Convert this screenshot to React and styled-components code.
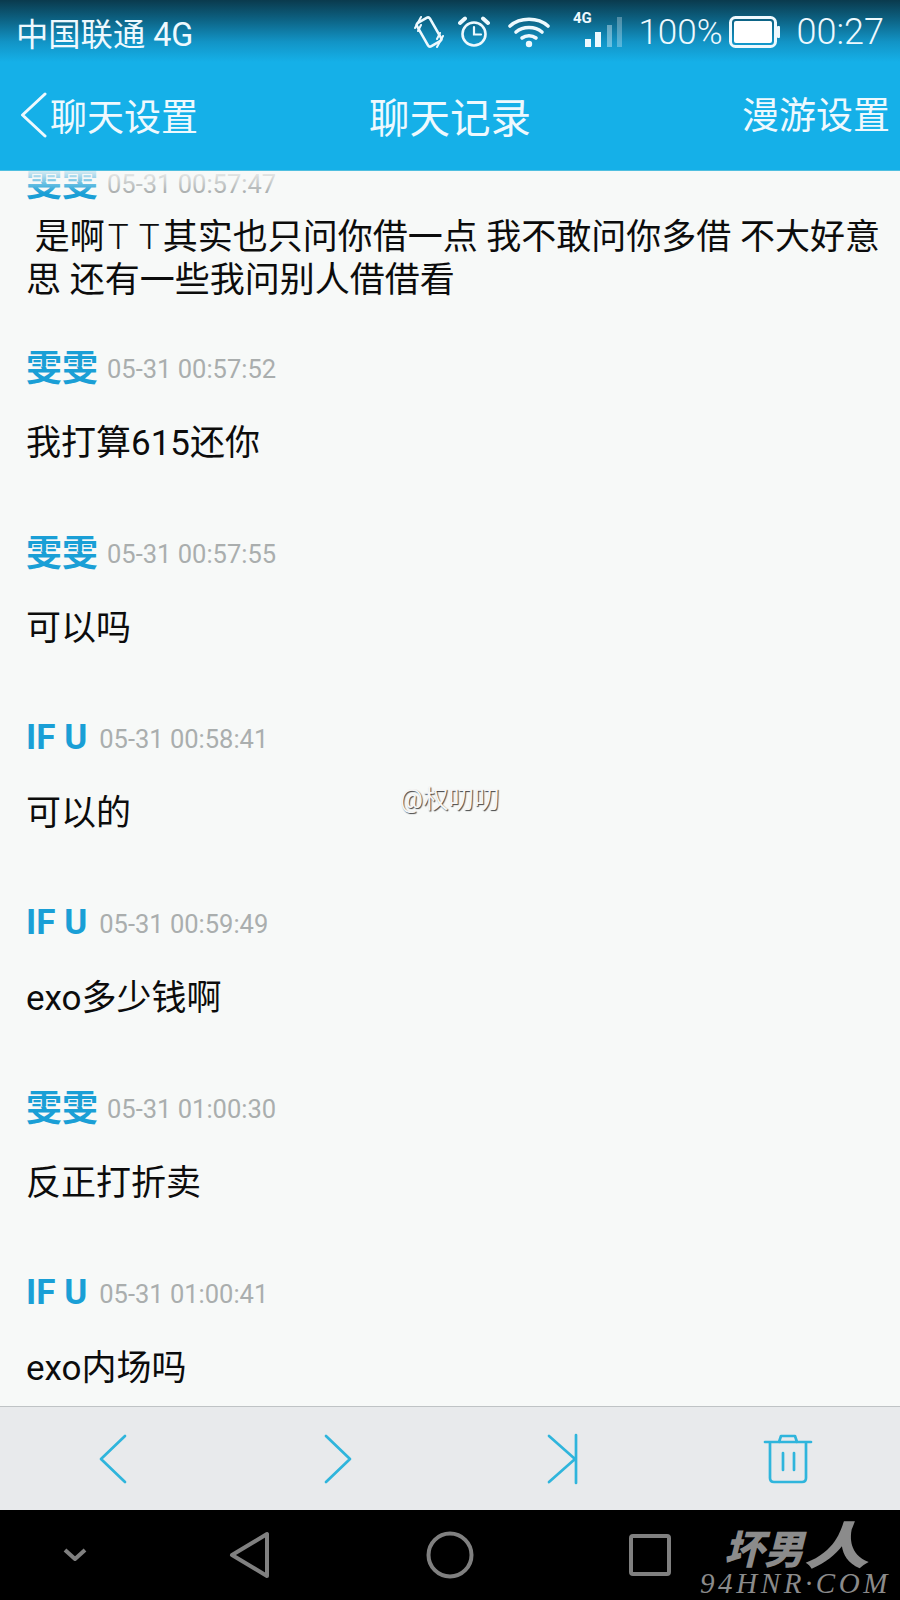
import React from 'react';
import styled, { createGlobalStyle } from 'styled-components';

const GlobalStyle = createGlobalStyle`
  html, body {
    margin: 0;
    padding: 0;
    background: #000;
  }
`;

const FONT = `Roboto, "Noto Sans CJK SC", sans-serif`;

const Emote = styled.span`
  margin: 0 3px;
  word-spacing: 3px;
  font-weight: 300;
`;

const messages = [
  {
    id: 1,
    name: '雯雯',
    time: '05-31 00:57:47',
    text: <> 是啊<Emote>T T</Emote>其实也只问你借一点 我不敢问你多借 不大好意思 还有一些我问别人借借看</>,
  },
  { id: 2, name: '雯雯', time: '05-31 00:57:52', text: '我打算615还你' },
  { id: 3, name: '雯雯', time: '05-31 00:57:55', text: '可以吗' },
  { id: 4, name: 'IF U', time: '05-31 00:58:41', text: '可以的' },
  { id: 5, name: 'IF U', time: '05-31 00:59:49', text: 'exo多少钱啊' },
  { id: 6, name: '雯雯', time: '05-31 01:00:30', text: '反正打折卖' },
  { id: 7, name: 'IF U', time: '05-31 01:00:41', text: 'exo内场吗' },
];

const Page = styled.div`
  position: relative;
  width: 900px;
  height: 1600px;
  display: flex;
  flex-direction: column;
  overflow: hidden;
  font-family: ${FONT};
`;

const Top = styled.header`
  flex: none;
  height: 171px;
  display: flex;
  flex-direction: column;
  color: #eef9fe;
  background: linear-gradient(#0a3a4d 0, #0c5f7f 18px, #1294c6 42px, #15b0e8 62px, #15b0e8 100%);
  border-bottom: 1px solid #4fbfe0;
  box-sizing: border-box;
`;

const StatusBar = styled.div`
  height: 64px;
  display: flex;
  align-items: center;
  padding: 0 16px;
  font-size: 35px;
  font-weight: 300;
`;

const Carrier = styled.span`
  font-size: 32.3px;
  font-weight: 400;
  white-space: pre;
  margin-right: auto;
`;

const StatusIcon = styled.svg`
  flex: none;
  margin-left: ${(p) => p.$gap || 0}px;
`;

const SignalIcon = styled(StatusIcon)`
  margin-top: -6px;
  overflow: visible;
`;

const StatusText = styled.span`
  margin-left: ${(p) => p.$gap || 0}px;
  line-height: 1;
`;

const Clock = styled(StatusText)`
  font-size: 36px;
`;

const TitleBar = styled.div`
  flex: 1;
  display: grid;
  grid-template-columns: 1fr auto 1fr;
  align-items: center;
  padding: 0 10px 4px;
`;

const BackLink = styled.a`
  display: flex;
  align-items: center;
  gap: 3px;
  padding-left: 10px;
  font-size: 37px;
`;

const Title = styled.h1`
  margin: 0;
  font-size: 40.5px;
  font-weight: 400;
`;

const RightLink = styled.a`
  justify-self: end;
  font-size: 37px;
  margin-bottom: 4px;
`;

const ListWrap = styled.main`
  position: relative;
  flex: 1;
  min-height: 0;
  overflow: hidden;
  background: #f7f9f8;
`;

const Fade = styled.div`
  position: absolute;
  left: 0;
  right: 0;
  top: 0;
  height: 22px;
  background: linear-gradient(rgba(247, 249, 248, 0.85), rgba(247, 249, 248, 0));
`;

const List = styled.div`
  display: flex;
  flex-direction: column;
  gap: 68px;
  padding: 0 10px 0 26px;
  margin-top: -8px;
`;

const Message = styled.article`
  margin-bottom: ${(p) => (p.$tight ? -22 : 0)}px;
`;

const Meta = styled.div`
  display: flex;
  align-items: center;
  height: 40px;
  margin-bottom: ${(p) => (p.$tight ? 13 : 34)}px;
`;

const Name = styled.span`
  font-size: ${(p) => (p.$latin ? 35 : 36)}px;
  font-weight: 700;
  color: #1a9fd6;
  margin: 0 ${(p) => (p.$latin ? 12 : 9)}px ${(p) => (p.$latin ? 2 : 6)}px 0;
`;

const Time = styled.span`
  font-size: 25.5px;
  color: #aaaeae;
  position: relative;
  top: 1px;
`;

const Body = styled.p`
  margin: 0;
  font-size: 35px;
  line-height: 43px;
  color: #0c0c0c;
  white-space: pre-wrap;
`;

const Toolbar = styled.nav`
  flex: none;
  height: 104px;
  box-sizing: border-box;
  display: grid;
  grid-template-columns: repeat(4, 1fr);
  align-items: center;
  justify-items: center;
  background: #e8eaec;
  border-top: 1px solid #bfc3c5;
`;

const ToolIcon = styled.svg`
  fill: none;
  stroke: #2fb5dc;
  stroke-width: 2.7;
  stroke-linecap: round;
  stroke-linejoin: round;
`;

const NavBar = styled.nav`
  position: relative;
  flex: none;
  height: 90px;
  display: grid;
  grid-template-columns: 150px 200px 200px 200px 150px;
  align-items: center;
  justify-items: center;
  background: #000;
`;

const NavIcon = styled.svg`
  fill: none;
  stroke: #808080;
  stroke-width: 4;
  stroke-linejoin: round;
`;

const Logo = styled.div`
  position: absolute;
  left: 700px;
  top: 6px;
  width: 195px;
  color: #8b8b8b;
`;

const LogoName = styled.div`
  height: 52px;
  line-height: 52px;
  font-family: "Noto Sans CJK SC", sans-serif;
  font-weight: 900;
  font-style: italic;
  white-space: nowrap;
  padding-left: 24px;
`;

const LogoChar = styled.span`
  display: inline-block;
  font-size: ${(p) => p.$size}px;
  transform: scaleX(${(p) => p.$stretch || 1});
  transform-origin: left center;
`;

const LogoUrl = styled.div`
  font-family: "Liberation Serif", serif;
  font-style: italic;
  font-size: 29px;
  line-height: 30px;
  letter-spacing: 3.6px;
  white-space: nowrap;
`;

const Stamp = styled.div`
  position: absolute;
  left: 400px;
  top: 784px;
  font-size: 25.5px;
  line-height: 30px;
  color: #f6f6f6;
  text-shadow: 1px 1px 1px #444;
`;

const App = () => (
  <Page>
    <GlobalStyle />
    <Top>
      <StatusBar>
        <Carrier>中国联通 4G</Carrier>
        {/* vibrate */}
        <StatusIcon width="30" height="34" viewBox="0 0 30 34" fill="none" stroke="#eef9fe" strokeLinecap="round" strokeLinejoin="round">
          <rect x="7.5" y="3.5" width="15" height="27" rx="2.5" strokeWidth="2.6" transform="rotate(-30 15 17)" />
          <path d="M1 13 L7 2 M4 16 L7 10 M29 21 L23 32 M26 18 L23 24" strokeWidth="2" />
        </StatusIcon>
        {/* alarm */}
        <StatusIcon $gap={14} width="32" height="32" viewBox="0 0 32 32" fill="none" stroke="#eef9fe" strokeLinecap="round">
          <circle cx="16" cy="18" r="11.5" strokeWidth="2.6" />
          <path d="M16 11 V18.5 H23" strokeWidth="2.2" />
          <path d="M2 7 L7 2.5 M30 7 L25 2.5" strokeWidth="4" />
        </StatusIcon>
        {/* wifi */}
        <StatusIcon $gap={18} width="42" height="32" viewBox="0 0 42 32" fill="none" stroke="#eef9fe" strokeLinecap="round">
          <path d="M2 10 C12 1 30 1 40 10" strokeWidth="3.6" />
          <path d="M8 16 C15 10 27 10 34 16" strokeWidth="3.6" />
          <path d="M14 22 C18 19 24 19 28 22" strokeWidth="3.6" />
          <circle cx="21" cy="28" r="3.2" fill="#eef9fe" stroke="none" />
        </StatusIcon>
        {/* 4G signal */}
        <SignalIcon $gap={23} width="50" height="36" viewBox="0 0 50 36">
          <text x="0" y="12" fontFamily="Roboto, sans-serif" fontSize="15" fontWeight="700" fill="#eef9fe">4G</text>
          <rect x="12" y="28" width="6" height="8" fill="#eef9fe" />
          <rect x="22" y="21" width="6" height="15" fill="#eef9fe" />
          <rect x="34" y="14" width="5" height="22" fill="#eef9fe" fillOpacity="0.4" />
          <rect x="44" y="6" width="5" height="30" fill="#eef9fe" fillOpacity="0.3" />
        </SignalIcon>
        <StatusText $gap={15}>100%</StatusText>
        {/* battery */}
        <StatusIcon $gap={6} width="51" height="32" viewBox="0 0 51 32">
          <rect x="1.5" y="1.5" width="45" height="29" rx="5" fill="none" stroke="#eef9fe" strokeWidth="3" />
          <rect x="5" y="5" width="38" height="22" rx="2" fill="#fff" />
          <rect x="48" y="10" width="3" height="12" rx="1" fill="#eef9fe" />
        </StatusIcon>
        <Clock $gap={17}>00:27</Clock>
      </StatusBar>
      <TitleBar>
        <BackLink>
          <svg width="27" height="46" viewBox="0 0 27 46" fill="none" stroke="#eef9fe" strokeWidth="3" strokeLinecap="round" strokeLinejoin="round">
            <path d="M25 2 L2.5 23 L25 44" />
          </svg>
          聊天设置
        </BackLink>
        <Title>聊天记录</Title>
        <RightLink>漫游设置</RightLink>
      </TitleBar>
    </Top>

    <ListWrap>
      <List>
        {messages.map((m) => (
          <Message key={m.id} $tight={m.id === 1}>
            <Meta $tight={m.id === 1}>
              <Name $latin={m.name === 'IF U'}>{m.name}</Name>
              <Time>{m.time}</Time>
            </Meta>
            <Body>{m.text}</Body>
          </Message>
        ))}
      </List>
      <Fade />
    </ListWrap>

    <Toolbar>
      <ToolIcon width="30" height="52" viewBox="0 0 30 52">
        <path d="M27 3 L3 26 L27 49" />
      </ToolIcon>
      <ToolIcon width="30" height="52" viewBox="0 0 30 52">
        <path d="M3 3 L27 26 L3 49" />
      </ToolIcon>
      <ToolIcon width="32" height="52" viewBox="0 0 32 52">
        <path d="M2 3 L28 26 L2 49 M29 2 V50" />
      </ToolIcon>
      <ToolIcon width="50" height="52" viewBox="0 0 50 52">
        <path d="M2 9 H48 M16 9 L18 3 H32 L34 9 M7 9 V45 Q7 49 11 49 H39 Q43 49 43 45 V9 M20 20 V37 M31 20 V37" />
      </ToolIcon>
    </Toolbar>

    <NavBar>
      <NavIcon width="24" height="16" viewBox="0 0 24 16">
        <path d="M2 3 L12 12 L22 3" />
      </NavIcon>
      <NavIcon width="42" height="48" viewBox="0 0 42 48">
        <path d="M38 3 V45 L3 24 Z" />
      </NavIcon>
      <NavIcon width="48" height="48" viewBox="0 0 48 48">
        <circle cx="24" cy="24" r="21.5" />
      </NavIcon>
      <NavIcon width="42" height="42" viewBox="0 0 42 42">
        <rect x="2" y="2" width="38" height="38" rx="2" />
      </NavIcon>
      <span />
      <Logo>
        <LogoName>
          <LogoChar $size={40}>坏男</LogoChar>
          <LogoChar $size={50} $stretch={1.3}>人</LogoChar>
        </LogoName>
        <LogoUrl>94HNR·COM</LogoUrl>
      </Logo>
    </NavBar>

    <Stamp>@权叨叨</Stamp>
  </Page>
);

export default App;
